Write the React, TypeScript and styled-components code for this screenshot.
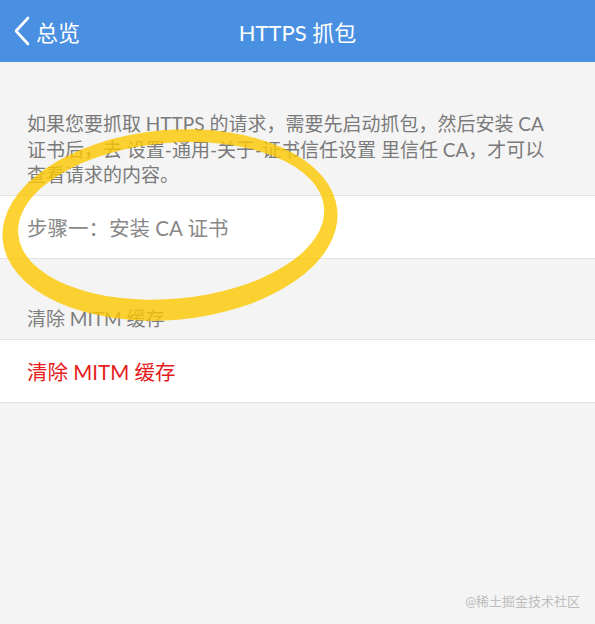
import React from "react";
import styled, { createGlobalStyle } from "styled-components";

const GlobalStyle = createGlobalStyle`
  html, body {
    margin: 0;
    padding: 0;
    background: #f4f4f4;
  }
  * {
    box-sizing: border-box;
  }
`;

const FONT = `"Lato", "Noto Sans CJK SC", sans-serif`;

const App: React.FC = () => {
  return (
    <Page>
      <GlobalStyle />
      <NavBar>
        <BackButton>
          <svg width="18" height="30" viewBox="0 0 18 30">
            <path
              d="M15 2 L3 15 L15 28"
              fill="none"
              stroke="#fff"
              strokeWidth="2.6"
              strokeLinecap="round"
              strokeLinejoin="round"
            />
          </svg>
          <span>总览</span>
        </BackButton>
        <NavTitle>HTTPS 抓包</NavTitle>
      </NavBar>

      <Description>
        如果您要抓取 HTTPS 的请求，需要先启动抓包，然后安装 CA
        <br />
        证书后，去 设置-通用-关于-证书信任设置 里信任 CA，才可以
        <br />
        查看请求的内容。
      </Description>
      <Group>
        <Cell>步骤一：安装 CA 证书</Cell>
      </Group>

      <SectionHeader>清除 MITM 缓存</SectionHeader>
      <Group>
        <Cell $danger>清除 MITM 缓存</Cell>
      </Group>

      {/* hand-drawn marker ring over the first step */}
      <Highlight width="360" height="230" viewBox="0 110 360 230">
        <path
          d="M 2 225 a 168 95 0 1 0 336 0 a 168 95 0 1 0 -336 0 Z
             M 18 221 a 153.5 78 0 1 0 307 0 a 153.5 78 0 1 0 -307 0 Z"
          fill="#fcc800"
          fillOpacity="0.8"
          fillRule="evenodd"
          transform="rotate(-5 170 225)"
        />
      </Highlight>

      <Watermark>@稀土掘金技术社区</Watermark>
    </Page>
  );
};

export default App;

const Page = styled.div`
  position: relative;
  min-height: 624px;
  background: #f4f4f4;
  font-family: ${FONT};
  overflow: hidden;
`;

const NavBar = styled.div`
  position: relative;
  height: 62px;
  background: #4a90e2;
  display: flex;
  align-items: center;
  justify-content: center;
  color: #fff;
`;

const BackButton = styled.div`
  position: absolute;
  left: 13px;
  top: 0;
  bottom: 0;
  display: flex;
  align-items: center;
  gap: 5px;
  font-size: 22px;

  svg {
    display: block;
  }
`;

const NavTitle = styled.div`
  font-size: 22px;
`;

const Description = styled.div`
  padding: 49px 20px 7px 27px;
  font-size: 19px;
  line-height: 25.5px;
  color: #7a7a7a;
  white-space: nowrap;
`;

const Group = styled.div`
  background: #fff;
  border-top: 1px solid #e2e2e2;
  border-bottom: 1px solid #e2e2e2;
`;

const Cell = styled.div<{ $danger?: boolean }>`
  height: 62px;
  display: flex;
  align-items: center;
  padding-left: 27px;
  font-size: 20.5px;
  color: ${(p) => (p.$danger ? "#e51c1c" : "#888")};
`;

const SectionHeader = styled.div`
  padding: 47px 27px 8px;
  font-size: 19px;
  line-height: 25px;
  color: #7d7d7d;
`;

const Highlight = styled.svg`
  position: absolute;
  left: 0;
  top: 110px;
  pointer-events: none;
`;

const Watermark = styled.div`
  position: absolute;
  right: 15px;
  bottom: 14px;
  font-size: 13px;
  color: #bdbdbd;
`;
